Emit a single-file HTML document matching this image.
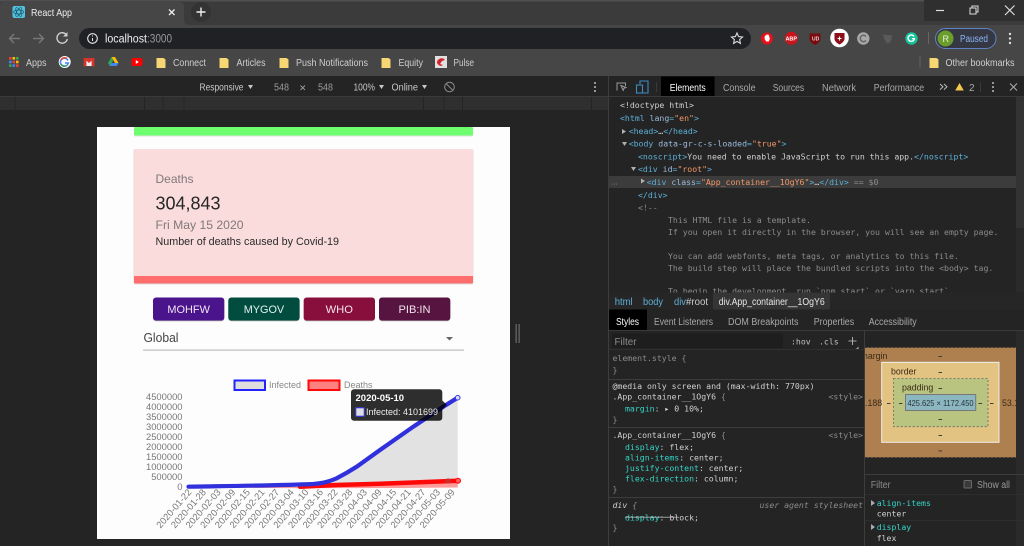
<!DOCTYPE html>
<html><head><meta charset="utf-8"><title>React App</title>
<style>
html,body{margin:0;padding:0;width:1024px;height:546px;overflow:hidden;background:#242424}
svg{display:block;filter:blur(.35px)}
text{font-family:"Liberation Sans",sans-serif;font-size:10px;white-space:pre}
.m text,text.m{font-family:"DejaVu Sans Mono",monospace;font-size:8.2px}
.t{fill:#5db0d7}.a{fill:#9bbbdc}.v{fill:#f29766}.w{fill:#d0d0d0}.c{fill:#8b8b8b}.k{fill:#35d4c7}
.tk text{font-size:9.4px;fill:#777}
</style></head><body>
<svg width="1024" height="546" viewBox="0 0 1024 546" xmlns="http://www.w3.org/2000/svg">
<defs><clipPath id="bx"><rect x="865" y="340" width="151" height="130"/></clipPath></defs>
<rect width="1024" height="546" fill="#242424"/>
<!-- browser chrome -->
<rect width="1024" height="25" fill="#3b3b3b"/>
<rect y="0" width="1024" height="1.5" fill="#505050"/>
<rect y="25" width="1024" height="51" fill="#464646"/>
<path d="M0 25V5Q0 2 3 2H179Q184 2 184 7V20Q184 25 189 25Z" fill="#464646"/>
<rect x="924" y="0" width="100" height="21" fill="#2f2f2f"/>
<path d="M936 10.500h8" stroke="#ddd" stroke-width="1.200"/>
<path d="M970 8h6v6h-6zM972 8V6h6v6h-2" fill="none" stroke="#ddd" stroke-width="1"/>
<path d="M1005 5.500l9.500 9.500M1014.500 5.500l-9.500 9.500" stroke="#ddd" stroke-width="1.200"/>
<rect x="12.500" y="6" width="12.500" height="12" rx="2" fill="#53c1de"/>
<g fill="none" stroke="#1b5c72" stroke-width=".7"><ellipse cx="18.700" cy="12" rx="5" ry="2"/><ellipse cx="18.700" cy="12" rx="5" ry="2" transform="rotate(60 18.700 12)"/><ellipse cx="18.700" cy="12" rx="5" ry="2" transform="rotate(120 18.700 12)"/></g>
<text x="31" y="16" style="font-size:10.500px" fill="#eee" textLength="41" lengthAdjust="spacingAndGlyphs">React App</text>
<path d="M169 9.500l5.500 5.500M174.500 9.500l-5.500 5.500" stroke="#eee" stroke-width="1.300"/>
<circle cx="201" cy="12" r="10" fill="#333"/>
<path d="M196.500 12h9M201 7.500v9" stroke="#eee" stroke-width="1.400"/>
<!-- nav -->
<path d="M20 38.500H9.500M14 34l-4.500 4.500 4.500 4.500" fill="none" stroke="#787878" stroke-width="1.400"/>
<path d="M33 38.500H43.500M39 34l4.500 4.500-4.500 4.500" fill="none" stroke="#787878" stroke-width="1.400"/>
<path d="M66.500 35a5.200 5.200 0 1 0 .8 4" fill="none" stroke="#d0d0d0" stroke-width="1.400"/><path d="M67.500 32v4.500h-4.500z" fill="#d0d0d0"/>
<rect x="79" y="28" width="672" height="21" rx="10.500" fill="#202124"/>
<circle cx="92.500" cy="38.500" r="4.800" fill="none" stroke="#e6e6e6" stroke-width="1.100"/><path d="M92.500 38v3M92.500 35.500v1" stroke="#e6e6e6"/>
<text x="105" y="42.500" style="font-size:11.500px" fill="#eee" textLength="42" lengthAdjust="spacingAndGlyphs">localhost</text>
<text x="147" y="42.500" style="font-size:11.500px" fill="#999" textLength="25" lengthAdjust="spacingAndGlyphs">:3000</text>
<path d="M737 33l1.600 3.600 3.900.4-2.900 2.600.8 3.800-3.400-2-3.400 2 .8-3.800-2.900-2.600 3.900-.4z" fill="none" stroke="#ddd" stroke-width="1.100"/>
<!-- extensions -->
<circle cx="767" cy="38.500" r="6" fill="#e8101a"/><path d="M764.500 37.500l.5-2 1 .2.300-1.200 1.200.2.300-.2 1 .5.500 1.500.5 2.500-1 2.500h-2.500l-1.500-2z" fill="#fff"/>
<path d="M788.600 32h5.400l3.600 3.600v5.400l-3.600 3.600h-5.400l-3.600-3.600v-5.400z" fill="#c9141b"/><text x="785.500" y="40.500" style="font-size:5.800px;font-weight:bold" fill="#fff" textLength="11.500" lengthAdjust="spacingAndGlyphs">ABP</text>
<path d="M809.500 33.500h11v6q-1 3.500-5.500 5.500-4.500-2-5.500-5.500z" fill="#7c0a0f"/><text x="812" y="40.500" style="font-size:5px;font-weight:bold" fill="#ddd">UD</text>
<circle cx="839.500" cy="38" r="9.300" fill="#fff"/><path d="M834.500 33h10v6.500q-1 3-5 5-4-2-5-5z" fill="#8c0f1a"/><path d="M837.500 38.500h4M839.500 36.500v4" stroke="#fff" stroke-width="1.100"/>
<circle cx="863.300" cy="38.500" r="6.200" fill="#a8a8a8"/><path d="M866 36.500a3.200 3.200 0 1 0 0 4" fill="none" stroke="#666" stroke-width="1.500"/>
<path d="M883 34.500l10 1-2 2.500 1 1-2 3.500-3 1-2.500-4z" fill="#5a5a5a"/>
<circle cx="911.500" cy="38.500" r="6.200" fill="#15c39a"/><path d="M914 36.500a3.200 3.200 0 1 0 .4 2.200h-2.500" fill="none" stroke="#fff" stroke-width="1.400"/>
<rect x="928" y="32" width="1" height="12" fill="#666"/>
<rect x="935.500" y="28.500" width="60.500" height="20" rx="10" fill="#353842" stroke="#5e83c4" stroke-width="1"/>
<circle cx="945.500" cy="38.500" r="8" fill="#6b9d2c"/><text x="942.500" y="42" style="font-size:9px" fill="#e8f0d8">R</text>
<text x="960" y="42" style="font-size:10px" fill="#8ab4f8" textLength="28" lengthAdjust="spacingAndGlyphs">Paused</text>
<g fill="#ddd"><circle cx="1010" cy="34" r="1.200"/><circle cx="1010" cy="38.500" r="1.200"/><circle cx="1010" cy="43" r="1.200"/></g>
<!-- bookmarks -->
<g><rect x="9" y="57" width="2.600" height="2.600" fill="#ea4335"/><rect x="12.500" y="57" width="2.600" height="2.600" fill="#fbbc05"/><rect x="16" y="57" width="2.600" height="2.600" fill="#34a853"/><rect x="9" y="60.700" width="2.600" height="2.600" fill="#4285f4"/><rect x="12.500" y="60.700" width="2.600" height="2.600" fill="#ea4335"/><rect x="16" y="60.700" width="2.600" height="2.600" fill="#fbbc05"/><rect x="9" y="64.300" width="2.600" height="2.600" fill="#34a853"/><rect x="12.500" y="64.300" width="2.600" height="2.600" fill="#4285f4"/><rect x="16" y="64.300" width="2.600" height="2.600" fill="#ea4335"/></g>
<text x="26" y="66" fill="#cfcfcf" style="font-size:10px" textLength="20.500" lengthAdjust="spacingAndGlyphs">Apps</text>
<text x="173" y="66" fill="#cfcfcf" style="font-size:10px" textLength="33" lengthAdjust="spacingAndGlyphs">Connect</text>
<text x="236.500" y="66" fill="#cfcfcf" style="font-size:10px" textLength="29" lengthAdjust="spacingAndGlyphs">Articles</text>
<text x="296" y="66" fill="#cfcfcf" style="font-size:10px" textLength="72" lengthAdjust="spacingAndGlyphs">Push Notifications</text>
<text x="398.500" y="66" fill="#cfcfcf" style="font-size:10px" textLength="24.500" lengthAdjust="spacingAndGlyphs">Equity</text>
<text x="453.500" y="66" fill="#cfcfcf" style="font-size:10px" textLength="20.500" lengthAdjust="spacingAndGlyphs">Pulse</text>
<text x="945.500" y="66" fill="#cfcfcf" style="font-size:10px" textLength="69" lengthAdjust="spacingAndGlyphs">Other bookmarks</text>
<circle cx="64.700" cy="62" r="6" fill="#fff"/><path d="M68 60.500a4 4 0 1 0 .3 2.500H65" fill="none" stroke="#4285f4" stroke-width="1.500"/><path d="M61 60a4 4 0 0 1 6-1.500" fill="none" stroke="#ea4335" stroke-width="1.500"/><path d="M61 64a4 4 0 0 0 5.500 1.500" fill="none" stroke="#34a853" stroke-width="1.500"/>
<rect x="84" y="58" width="10" height="8" fill="#eee"/><path d="M84 58l5 4.500 5-4.500M84 58v8h2v-6M94 58v8h-2v-6" fill="#d9342b" stroke="#d9342b" stroke-width=".8"/>
<path d="M111.500 57h3.500l3.500 6h-3.500z" fill="#fbbc05"/><path d="M111.500 57l-3.500 6 1.800 3 3.500-6z" fill="#34a853"/><path d="M109.800 66h7l1.700-3h-7z" fill="#4285f4"/>
<rect x="131.500" y="58" width="11" height="8" rx="2" fill="#f00"/><path d="M135.800 60l3 2-3 2z" fill="#fff"/>
<g fill="#f7d774"><path d="M156.500 58h7l2 1.500V68h-9z"/><path d="M219.500 58h7l2 1.500V68h-9z"/><path d="M279.500 58h7l2 1.500V68h-9z"/><path d="M381.500 58h7l2 1.500V68h-9z"/><path d="M929.500 58h7l2 1.500V68h-9z"/></g>
<rect x="435" y="56" width="12" height="12" fill="#e0e0e0"/><path d="M437 63a4.500 4.500 0 0 1 8-3l-3 1-2 3 3 1q-3 2.500-6-2z" fill="#d3232a"/>
<rect x="919.500" y="56" width="1" height="12" fill="#626262"/>
<!-- device toolbar -->
<rect y="76" width="608" height="20" fill="#242424"/>
<rect y="96" width="608" height="14" fill="#2f2f2f"/>
<rect y="96" width="608" height="1" fill="#3a3a3a"/>
<g fill="#242424"><rect x="14.500" y="97" width="1" height="13"/><rect x="144" y="97" width="1" height="13"/><rect x="162.500" y="97" width="1" height="13"/><rect x="183.500" y="97" width="1" height="13"/><rect x="423" y="97" width="1" height="13"/><rect x="443.500" y="97" width="1" height="13"/><rect x="462" y="97" width="1" height="13"/><rect x="591" y="97" width="1" height="13"/></g>
<text x="199.500" y="90.500" style="font-size:10px" fill="#c8c8c8" textLength="44" lengthAdjust="spacingAndGlyphs">Responsive</text>
<path d="M248 85h5l-2.500 4z" fill="#c8c8c8"/>
<text x="274" y="90.500" style="font-size:10px" fill="#9a9a9a" textLength="15" lengthAdjust="spacingAndGlyphs">548</text>
<text x="318" y="90.500" style="font-size:10px" fill="#9a9a9a" textLength="15" lengthAdjust="spacingAndGlyphs">548</text>
<path d="M300.500 85.500l4.500 4.500M305 85.500l-4.500 4.500" stroke="#999" stroke-width=".9"/>
<text x="353.500" y="90.500" style="font-size:10px" fill="#c8c8c8" textLength="21.500" lengthAdjust="spacingAndGlyphs">100%</text>
<path d="M379 85h5l-2.500 4z" fill="#c8c8c8"/>
<text x="391.500" y="90.500" style="font-size:10px" fill="#c8c8c8" textLength="26.500" lengthAdjust="spacingAndGlyphs">Online</text>
<path d="M422 85h5l-2.500 4z" fill="#c8c8c8"/>
<circle cx="449.500" cy="87" r="4.800" fill="none" stroke="#8a8a8a"/><path d="M446 83.500l7 7" stroke="#8a8a8a"/>
<g fill="#bbb"><circle cx="595" cy="83" r="1"/><circle cx="595" cy="87" r="1"/><circle cx="595" cy="91" r="1"/></g>
<!-- page viewport -->
<rect x="97" y="127" width="413" height="412" fill="#fdfdfd"/>
<rect x="134" y="127" width="339" height="9.500" rx="1.500" fill="#c8c8c8" opacity=".6"/>
<rect x="134" y="127" width="339" height="8.500" rx="1.500" fill="#6eff6e"/>
<rect x="133.500" y="149" width="340" height="135.500" rx="2" fill="#c8c8c8" opacity=".6"/>
<rect x="134" y="149" width="339" height="134.500" rx="2" fill="#fadcdc"/>
<path d="M134 276h339v6q0 1.500-1.500 1.500h-336q-1.500 0-1.500-1.500z" fill="#ff6d6d"/>
<text x="155.500" y="183" style="font-size:12px" fill="#807878">Deaths</text>
<text x="155.500" y="209.500" style="font-size:18px" fill="#262626">304,843</text>
<text x="155.500" y="229" style="font-size:12.200px" fill="#807878" textLength="88" lengthAdjust="spacingAndGlyphs">Fri May 15 2020</text>
<text x="155.500" y="245" style="font-size:10.700px" fill="#2a2a2a" textLength="183.500" lengthAdjust="spacingAndGlyphs">Number of deaths caused by Covid-19</text>
<g>
<rect x="153" y="298" width="71.300" height="23.300" rx="3" fill="#aaa"/><rect x="228.300" y="298" width="71.300" height="23.300" rx="3" fill="#aaa"/><rect x="303.700" y="298" width="71.300" height="23.300" rx="3" fill="#aaa"/><rect x="379" y="298" width="71.300" height="23.300" rx="3" fill="#aaa"/>
<rect x="153" y="297.500" width="71.300" height="23" rx="3" fill="#4a148c"/><rect x="228.300" y="297.500" width="71.300" height="23" rx="3" fill="#004d40"/><rect x="303.700" y="297.500" width="71.300" height="23" rx="3" fill="#880e3c"/><rect x="379" y="297.500" width="71.300" height="23" rx="3" fill="#571440"/>
<text x="167.400" y="313" style="font-size:11.200px" fill="#f0e4f4" textLength="42.500" lengthAdjust="spacingAndGlyphs">MOHFW</text>
<text x="243.700" y="313" style="font-size:11.200px" fill="#e4f0ee" textLength="40.500" lengthAdjust="spacingAndGlyphs">MYGOV</text>
<text x="339.300" y="313" text-anchor="middle" style="font-size:11.200px" fill="#f4e4ea">WHO</text>
<text x="398.500" y="313" style="font-size:11.200px" fill="#f0e4ee" textLength="32" lengthAdjust="spacingAndGlyphs">PIB:IN</text>
</g>
<text x="143.500" y="342" style="font-size:12.500px" fill="#444" textLength="35" lengthAdjust="spacingAndGlyphs">Global</text>
<path d="M446 337h7l-3.500 3.500z" fill="#666"/>
<rect x="143" y="349.500" width="321" height="1.200" fill="#bdbdbd"/>
<!-- chart -->
<rect x="234.500" y="380.500" width="30.500" height="9.500" fill="#dedede" stroke="#2222ff" stroke-width="2"/>
<text x="269" y="388" style="font-size:9.400px" fill="#888" textLength="32" lengthAdjust="spacingAndGlyphs">Infected</text>
<rect x="308.500" y="380.500" width="31" height="9.500" fill="#ff8080" stroke="#ff0808" stroke-width="2"/>
<text x="344" y="388" style="font-size:9.400px" fill="#888" textLength="28.500" lengthAdjust="spacingAndGlyphs">Deaths</text>
<g class="tk" text-anchor="end">
<text x="182.500" y="400">4500000</text><text x="182.500" y="410">4000000</text><text x="182.500" y="420">3500000</text><text x="182.500" y="430">3000000</text><text x="182.500" y="440">2500000</text><text x="182.500" y="450">2000000</text><text x="182.500" y="460">1500000</text><text x="182.500" y="470">1000000</text><text x="182.500" y="480">500000</text><text x="182.500" y="490">0</text>
</g>
<path d="M188.500 486.700C230 486 280 485.500 313.300 484 C325 483 330 481 336.700 478.300 C345 474 350 471 356.700 466.700 L380 450 L413.300 426.700 L443.300 406.700 L457.700 397.700 V487 H188.500Z" fill="#e2e2e2"/>
<path d="M188.500 487H317L336 485 380 484 413 482.700 457.700 480V487.500Q300 489 188.500 487Z" fill="#ff9a9a"/>
<path d="M300 486.800L336 485 380 483.800 413 482.500 457.700 480.800" fill="none" stroke="#ff0808" stroke-width="4.500" stroke-linecap="round"/>
<circle cx="448" cy="481" r="2.600" fill="#c83030"/><circle cx="458" cy="480.800" r="2.500" fill="#ff6060" stroke="#f00"/>
<path d="M188.500 486.700C230 486 280 485.500 313.300 484 C325 483 330 481 336.700 478.300 C345 474 350 471 356.700 466.700 L380 450 L413.300 426.700 L443.300 406.700 L457.700 397.700" fill="none" stroke="#3030dc" stroke-width="4.200" stroke-linecap="round"/>
<circle cx="457.700" cy="397.700" r="2.300" fill="#dde" stroke="#3535e8"/>
<g class="tk" text-anchor="end">
<text transform="translate(192 492.500) rotate(-49)">2020-01-22</text>
<text transform="translate(206.600 492.500) rotate(-49)">2020-01-28</text>
<text transform="translate(221.300 492.500) rotate(-49)">2020-02-03</text>
<text transform="translate(235.900 492.500) rotate(-49)">2020-02-09</text>
<text transform="translate(250.500 492.500) rotate(-49)">2020-02-15</text>
<text transform="translate(265.200 492.500) rotate(-49)">2020-02-21</text>
<text transform="translate(279.800 492.500) rotate(-49)">2020-02-27</text>
<text transform="translate(294.400 492.500) rotate(-49)">2020-03-04</text>
<text transform="translate(309 492.500) rotate(-49)">2020-03-10</text>
<text transform="translate(323.700 492.500) rotate(-49)">2020-03-16</text>
<text transform="translate(338.300 492.500) rotate(-49)">2020-03-22</text>
<text transform="translate(352.900 492.500) rotate(-49)">2020-03-28</text>
<text transform="translate(367.600 492.500) rotate(-49)">2020-04-03</text>
<text transform="translate(382.200 492.500) rotate(-49)">2020-04-09</text>
<text transform="translate(396.800 492.500) rotate(-49)">2020-04-15</text>
<text transform="translate(411.400 492.500) rotate(-49)">2020-04-21</text>
<text transform="translate(426.100 492.500) rotate(-49)">2020-04-27</text>
<text transform="translate(440.700 492.500) rotate(-49)">2020-05-03</text>
<text transform="translate(455.300 492.500) rotate(-49)">2020-05-09</text>
</g>
<path d="M354 389.300h85.300a3 3 0 0 1 3 3v8.200l4.500 4.500-4.500 4.500v8.200a3 3 0 0 1-3 3H354a3 3 0 0 1-3-3v-25.400a3 3 0 0 1 3-3z" fill="#000" fill-opacity=".82"/>
<text x="355.500" y="401" style="font-size:9.500px;font-weight:bold" fill="#fff">2020-05-10</text>
<rect x="355.800" y="407.800" width="8.400" height="8.400" fill="#dedede" stroke="#3a3af0"/>
<text x="366" y="414.800" style="font-size:9.500px" fill="#eee" textLength="72" lengthAdjust="spacingAndGlyphs">Infected: 4101699</text>
<!-- drag handle -->
<rect x="515.500" y="324" width="1.300" height="19" fill="#666"/><rect x="518.500" y="324" width="1.300" height="19" fill="#666"/>
<!-- devtools -->
<rect x="608" y="76" width="416" height="470" fill="#242424"/>
<rect x="608" y="76" width="1" height="470" fill="#3d3d3d"/>
<rect x="609" y="96" width="415" height="1" fill="#3a3a3a"/>
<rect x="661" y="76.500" width="53.500" height="19.500" fill="#000"/>
<path d="M617 90.500v-7.500h8.500v3M621 85.500l5 2-2 .8-.8 2z" fill="none" stroke="#999" stroke-width="1"/>
<rect x="636.500" y="85" width="6" height="8" fill="none" stroke="#3d8ac4" stroke-width="1.100"/><path d="M640 84v-3h8v12h-5" fill="none" stroke="#3d8ac4" stroke-width="1.100"/>
<rect x="656" y="82" width="1" height="10" fill="#3a3a3a"/>
<text x="669.700" y="91" style="font-size:10px" fill="#fff" textLength="36" lengthAdjust="spacingAndGlyphs">Elements</text>
<text x="723" y="91" style="font-size:10px" fill="#a8a8a8" textLength="32.500" lengthAdjust="spacingAndGlyphs">Console</text>
<text x="772.700" y="91" style="font-size:10px" fill="#a8a8a8" textLength="31.500" lengthAdjust="spacingAndGlyphs">Sources</text>
<text x="822" y="91" style="font-size:10px" fill="#a8a8a8" textLength="34" lengthAdjust="spacingAndGlyphs">Network</text>
<text x="873.700" y="91" style="font-size:10px" fill="#a8a8a8" textLength="50.500" lengthAdjust="spacingAndGlyphs">Performance</text>
<path d="M940 84l3 2.800-3 2.800M944 84l3 2.800-3 2.800" fill="none" stroke="#bbb" stroke-width="1"/>
<path d="M959.500 83l4.300 7.500h-8.600z" fill="#f2c94c"/><text x="969" y="91" style="font-size:10px" fill="#aaa">2</text>
<rect x="980" y="82" width="1" height="10" fill="#3a3a3a"/>
<g fill="#bbb"><circle cx="993" cy="83" r="1"/><circle cx="993" cy="87" r="1"/><circle cx="993" cy="91" r="1"/></g>
<path d="M1010 83.500l7 7M1017 83.500l-7 7" stroke="#aaa" stroke-width="1.100"/>
<!-- elements pane -->
<rect x="1016" y="97" width="8" height="196" fill="#2a2a2a"/><rect x="1016" y="97" width="8" height="131" fill="#333"/>
<rect x="609" y="176" width="407" height="12" fill="#3c3c3c"/>
<g class="m">
<text x="620" y="108" class="w">&lt;!doctype html&gt;</text>
<text x="620" y="121"><tspan class="t">&lt;html </tspan><tspan class="a">lang</tspan><tspan class="t">=</tspan><tspan class="v">"en"</tspan><tspan class="t">&gt;</tspan></text>
<text x="628.700" y="134"><tspan class="t">&lt;head&gt;</tspan><tspan class="w">…</tspan><tspan class="t">&lt;/head&gt;</tspan></text>
<text x="628.700" y="146.500"><tspan class="t">&lt;body </tspan><tspan class="a">data-gr-c-s-loaded</tspan><tspan class="t">=</tspan><tspan class="v">"true"</tspan><tspan class="t">&gt;</tspan></text>
<text x="638" y="159.300"><tspan class="t">&lt;noscript&gt;</tspan><tspan class="w">You need to enable JavaScript to run this app.</tspan><tspan class="t">&lt;/noscript&gt;</tspan></text>
<text x="638" y="172"><tspan class="t">&lt;div </tspan><tspan class="a">id</tspan><tspan class="t">=</tspan><tspan class="v">"root"</tspan><tspan class="t">&gt;</tspan></text>
<text x="646.700" y="185"><tspan class="t">&lt;div </tspan><tspan class="a">class</tspan><tspan class="t">=</tspan><tspan class="v">"App_container__1OgY6"</tspan><tspan class="t">&gt;</tspan><tspan class="w">…</tspan><tspan class="t">&lt;/div&gt;</tspan><tspan class="c"> == $0</tspan></text>
<text x="638" y="198" class="t">&lt;/div&gt;</text>
<text x="638" y="210.300" class="c">&lt;!--</text>
<text x="668" y="223" class="c">This HTML file is a template.</text>
<text x="668" y="235" class="c">If you open it directly in the browser, you will see an empty page.</text>
<text x="668" y="259" class="c">You can add webfonts, meta tags, or analytics to this file.</text>
<text x="668" y="271" class="c">The build step will place the bundled scripts into the &lt;body&gt; tag.</text>
<text x="668" y="294" class="c">To begin the development, run `npm start` or `yarn start`.</text>
</g>
<g fill="#b0b0b0"><path d="M622 129l4 2.500-4 2.500zM641 178.500l4 2.500-4 2.500z"/><path d="M622 142l5 0-2.500 4zM631 167l5 0-2.500 4z"/></g>
<text x="611" y="184.500" style="font-size:8px" fill="#888">...</text>
<!-- breadcrumb -->
<rect x="609" y="292.700" width="415" height="16.800" fill="#262626"/>
<rect x="713" y="292.700" width="117" height="16.800" fill="#353535"/>
<text x="614.700" y="305" style="font-size:10px" fill="#5db0d7" textLength="18" lengthAdjust="spacingAndGlyphs">html</text>
<text x="643" y="305" style="font-size:10px" fill="#5db0d7" textLength="20" lengthAdjust="spacingAndGlyphs">body</text>
<text x="674" y="305" style="font-size:10px" fill="#5db0d7" textLength="12" lengthAdjust="spacingAndGlyphs">div</text>
<text x="686" y="305" style="font-size:10px" fill="#ccc" textLength="22" lengthAdjust="spacingAndGlyphs">#root</text>
<text x="718.700" y="305" style="font-size:10px" fill="#e6e6e6" textLength="106" lengthAdjust="spacingAndGlyphs">div.App_container__1OgY6</text>
<!-- sub tabs -->
<rect x="609" y="309.500" width="415" height="20.500" fill="#242424"/>
<rect x="609" y="309.500" width="38" height="20.500" fill="#000"/>
<text x="616" y="325" style="font-size:10px" fill="#fff" textLength="23" lengthAdjust="spacingAndGlyphs">Styles</text>
<text x="654" y="325" style="font-size:10px" fill="#a8a8a8" textLength="59" lengthAdjust="spacingAndGlyphs">Event Listeners</text>
<text x="728" y="325" style="font-size:10px" fill="#a8a8a8" textLength="70.500" lengthAdjust="spacingAndGlyphs">DOM Breakpoints</text>
<text x="813.700" y="325" style="font-size:10px" fill="#a8a8a8" textLength="40.500" lengthAdjust="spacingAndGlyphs">Properties</text>
<text x="868.700" y="325" style="font-size:10px" fill="#a8a8a8" textLength="48" lengthAdjust="spacingAndGlyphs">Accessibility</text>
<rect x="609" y="330" width="415" height="1" fill="#3a3a3a"/>
<!-- styles pane -->
<rect x="612" y="333.500" width="171" height="14.500" fill="#1e1e1e"/>
<text x="614.500" y="345" style="font-size:10px" fill="#8c8c8c" textLength="22" lengthAdjust="spacingAndGlyphs">Filter</text>
<text x="791" y="344.500" class="m" fill="#c4c4c4">:hov</text>
<text x="819" y="344.500" class="m" fill="#c4c4c4">.cls</text>
<path d="M848.500 341h8M852.500 337v8" stroke="#aaa" stroke-width="1"/><path d="M856 349l2.500-2.500V349z" fill="#aaa"/>
<rect x="609" y="349" width="255" height="1" fill="#2f2f2f"/>
<g fill="#3d3d3d"><rect x="609" y="379" width="255" height="1"/><rect x="609" y="427" width="255" height="1"/><rect x="609" y="497" width="255" height="1"/></g>
<rect x="864" y="331" width="1" height="215" fill="#3d3d3d"/>
<g class="m">
<text x="612.500" y="361" class="c">element.style {</text>
<text x="612.500" y="373" class="c">}</text>
<text x="612.500" y="389" class="w">@media only screen and (max-width: 770px)</text>
<text x="612.500" y="399.700"><tspan class="w">.App_container__1OgY6 </tspan><tspan class="c">{</tspan></text>
<text x="625" y="411.700"><tspan class="k">margin</tspan><tspan class="w">: ▸ 0 10%;</tspan></text>
<text x="612.500" y="422.300" class="c">}</text>
<text x="612.500" y="438"><tspan class="w">.App_container__1OgY6 </tspan><tspan class="c">{</tspan></text>
<text x="625" y="450"><tspan class="k">display</tspan><tspan class="w">: flex;</tspan></text>
<text x="625" y="460.700"><tspan class="k">align-items</tspan><tspan class="w">: center;</tspan></text>
<text x="625" y="471"><tspan class="k">justify-content</tspan><tspan class="w">: center;</tspan></text>
<text x="625" y="481.300"><tspan class="k">flex-direction</tspan><tspan class="w">: column;</tspan></text>
<text x="612.500" y="492" class="c">}</text>
<text x="612.500" y="508" style="font-style:italic"><tspan class="w">div </tspan><tspan class="c">{</tspan></text>
<text x="625" y="520.300"><tspan class="k">display</tspan><tspan class="w">: block;</tspan></text>
<text x="612.500" y="530.300" class="c">}</text>
<text x="863" y="399.700" text-anchor="end" class="c">&lt;style&gt;</text>
<text x="863" y="438" text-anchor="end" class="c">&lt;style&gt;</text>
<text x="863" y="508" text-anchor="end" class="c" style="font-style:italic">user agent stylesheet</text>
</g>
<rect x="625" y="516.800" width="54" height=".8" fill="#bbb"/>
<!-- box model -->
<rect x="865" y="347.500" width="151" height="110" fill="#ae8050"/>
<path d="M865 347.500H1016M865 457.500H1016" stroke="#333" stroke-dasharray="2 2" stroke-width=".8"/>
<rect x="881.700" y="362.300" width="117.300" height="80" fill="#e3c381" stroke="#eee" stroke-width="1"/>
<rect x="893.500" y="378.500" width="94.500" height="48.200" fill="#b8c47f" stroke="#666" stroke-dasharray="2 2" stroke-width=".8"/>
<rect x="905.500" y="394.500" width="70.200" height="16" fill="#8cb6c0" stroke="#777" stroke-width="1"/>
<g clip-path="url(#bx)">
<text x="860.500" y="359" style="font-size:8.800px" fill="#3a2a18">margin</text>
<text x="891" y="374.500" style="font-size:8.800px" fill="#3a2a18">border</text>
<text x="902" y="390.500" style="font-size:8.800px" fill="#3a2a18">padding</text>
<text x="940.500" y="406" text-anchor="middle" style="font-size:8.400px" fill="#26343a" textLength="66" lengthAdjust="spacingAndGlyphs">425.625 × 1172.450</text>
<text x="865" y="406" style="font-size:8.800px" fill="#3a2a18">.188</text>
<text x="1002" y="406" style="font-size:8.800px" fill="#3a2a18">53.1</text>
</g>
<g fill="#333"><rect x="938.500" y="356" width="3.500" height=".9"/><rect x="938.500" y="372" width="3.500" height=".9"/><rect x="938.500" y="388" width="3.500" height=".9"/><rect x="938.500" y="419" width="3.500" height=".9"/><rect x="938.500" y="435" width="3.500" height=".9"/><rect x="938.500" y="450.500" width="3.500" height=".9"/><rect x="887" y="403" width="3.500" height=".9"/><rect x="899" y="403" width="3.500" height=".9"/><rect x="978.500" y="403" width="3.500" height=".9"/><rect x="990" y="403" width="3.500" height=".9"/></g>
<rect x="1016" y="331" width="8" height="215" fill="#2a2a2a"/>
<rect x="865" y="474" width="159" height="1" fill="#3d3d3d"/>
<rect x="865" y="494" width="159" height="1" fill="#2e2e2e"/>
<rect x="865" y="520" width="159" height="1" fill="#2e2e2e"/>
<text x="870.700" y="488" style="font-size:10px" fill="#8c8c8c" textLength="20" lengthAdjust="spacingAndGlyphs">Filter</text>
<rect x="964" y="480.500" width="7.500" height="7.500" rx="1" fill="#3a3a3a" stroke="#6a6a6a"/>
<text x="977" y="488" style="font-size:10px" fill="#9a9a9a" textLength="33" lengthAdjust="spacingAndGlyphs">Show all</text>
<path d="M871 500l4 3-4 3zM871 524l4 3-4 3z" fill="#aaa"/>
<g class="m">
<text x="876.700" y="506" class="k">align-items</text>
<text x="876.700" y="516.500" class="w">center</text>
<text x="876.700" y="530" class="k">display</text>
<text x="876.700" y="541" class="w">flex</text>
</g>
</svg>
</body></html>
